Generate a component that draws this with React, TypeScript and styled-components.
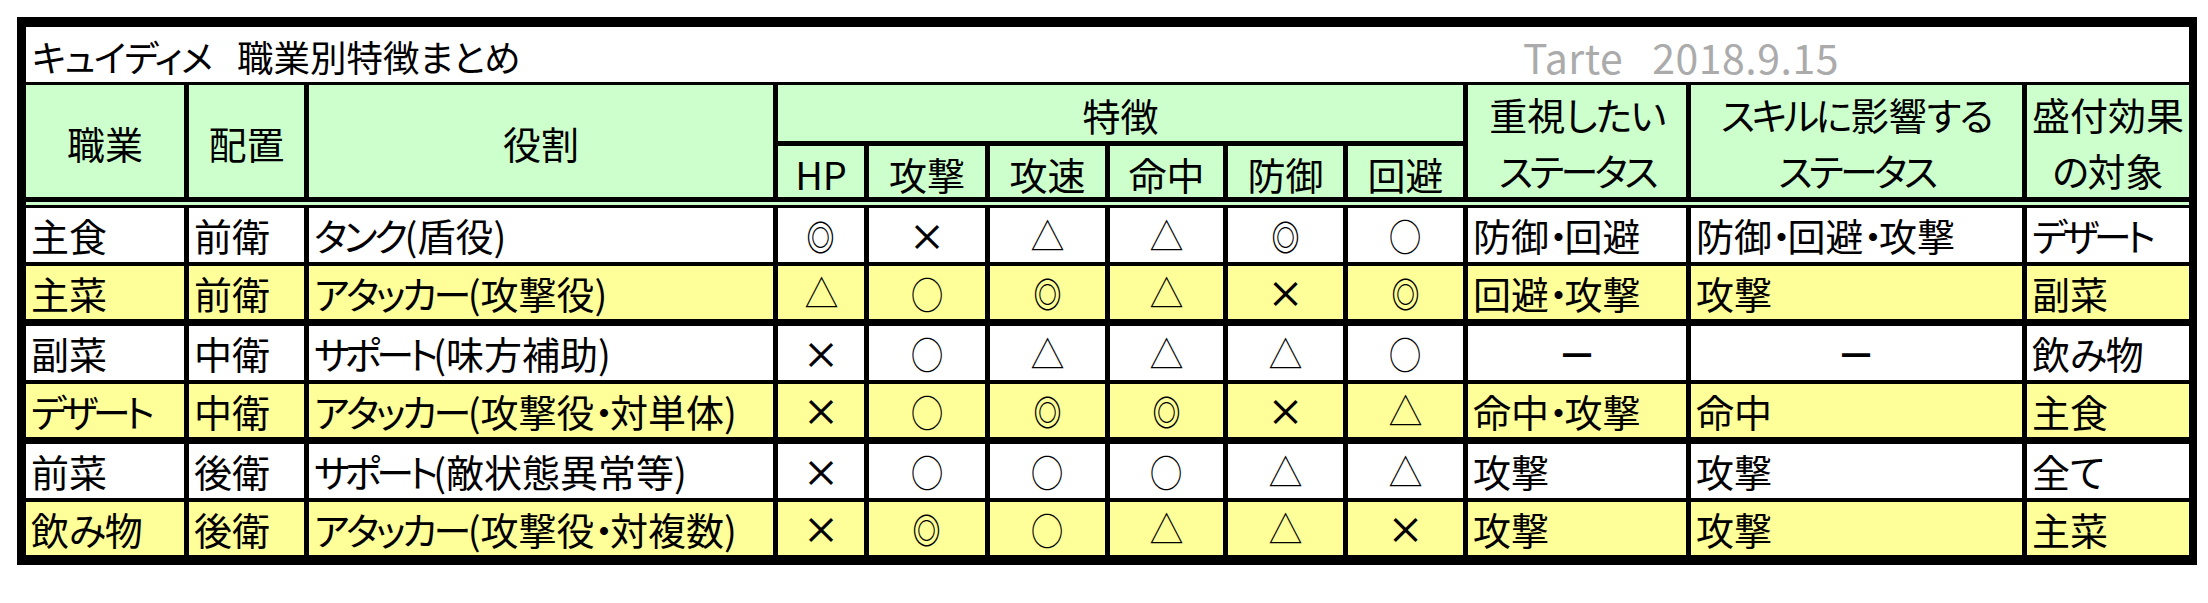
import React from 'react';
import styled, { createGlobalStyle } from 'styled-components';

const GlobalStyle = createGlobalStyle`
  html, body {
    margin: 0;
    padding: 0;
    background: #ffffff;
  }
  body {
    font-family: "Noto Sans CJK JP", "Noto Sans", sans-serif;
    color: #000000;
  }
`;

const COLUMNS = '163px 120px 469px 91px 121px 120px 118px 120px 120px 223px 336px 162px';
const GREEN = '#ccffcc';
const YELLOW = '#ffff99';

const Sheet = styled.div`
  margin: 17px 0 0 17px;
  width: 2163px;
  border: 9px solid #000;
  border-top-width: 10px;
  border-right-width: 8px;
  border-bottom-width: 10px;
  font-size: 38px;
  font-feature-settings: "palt" 1;
  line-height: 1;
`;

const TitleBar = styled.div`
  height: 58px;
  box-sizing: border-box;
  border-bottom: 3px solid #000;
  display: flex;
  align-items: flex-end;
  padding: 0 0 7px 6px;
  background: #fff;
`;

const Title = styled.span`
  flex: 0 0 1491px;
  font-size: 36.5px;
  white-space: pre;
`;

const Stamp = styled.span`
  color: #ababab;
  font-size: 41px;
  letter-spacing: 0.5px;
  white-space: pre;
  margin-bottom: -2px;
`;

const Header = styled.div`
  display: grid;
  grid-template-columns: ${COLUMNS};
  grid-template-rows: 61px 51px;
  background: ${GREEN};
`;

const HeadCell = styled.div<{ $rows?: number; $cols?: number; $last?: boolean; $stacked?: boolean }>`
  grid-row: span ${(p) => p.$rows ?? 1};
  grid-column: span ${(p) => p.$cols ?? 1};
  box-sizing: border-box;
  border-right: ${(p) => (p.$last ? 0 : 5)}px solid #000;
  border-bottom: ${(p) => (p.$cols && p.$cols > 1 ? 5 : 0)}px solid #000;
  display: flex;
  flex-direction: ${(p) => (p.$stacked ? 'column' : 'row')};
  align-items: center;
  justify-content: center;
  padding-top: ${(p) => (p.$stacked ? 0 : 4)}px;
  white-space: nowrap;
`;

const HeadLine = styled.span<{ $h: number }>`
  height: ${(p) => p.$h}px;
  display: flex;
  align-items: center;
`;

const DoubleRule = styled.div`
  height: 3px;
  border-top: 5px solid #000;
  border-bottom: 3px solid #000;
  background: ${GREEN};
`;

const Row = styled.div<{ $bg: string; $h: number; $rule: number }>`
  display: grid;
  grid-template-columns: ${COLUMNS};
  height: ${(p) => p.$h}px;
  box-sizing: border-box;
  background: ${(p) => p.$bg};
  border-bottom: ${(p) => p.$rule}px solid #000;
`;

const Cell = styled.div<{ $align?: 'left' | 'center'; $last?: boolean }>`
  box-sizing: border-box;
  border-right: ${(p) => (p.$last ? 0 : 5)}px solid #000;
  display: flex;
  align-items: center;
  justify-content: ${(p) => (p.$align === 'center' ? 'center' : 'flex-start')};
  padding: 0 5px;
  white-space: nowrap;
  overflow: hidden;
`;

// kana in the sheet's font are set tighter than the kanji
const Kana = styled.span<{ $tight: number }>`
  letter-spacing: ${(p) => -p.$tight}px;
`;

type MarkStyle = { size: number; weight: number; sx: number };

const markStyles: Record<string, MarkStyle> = {
  '◎': { size: 35, weight: 700, sx: 0.8 },
  '○': { size: 38, weight: 300, sx: 0.86 },
  '△': { size: 37, weight: 300, sx: 0.92 },
  '×': { size: 37, weight: 500, sx: 1 },
  '－': { size: 36, weight: 700, sx: 1.1 },
};

const Mark = styled.span<{ $kind: string }>`
  display: inline-block;
  font-size: ${(p) => markStyles[p.$kind]?.size ?? 38}px;
  font-weight: ${(p) => markStyles[p.$kind]?.weight ?? 400};
  transform: scaleX(${(p) => markStyles[p.$kind]?.sx ?? 1});
`;

const KATA = /[\u30A0-\u30FF]+/;
const HIRA = /[\u3040-\u309F]+/;

const Jp: React.FC<{ text: string; scale?: number }> = ({ text, scale = 1 }) => {
  const parts = text.split(/([\u30A0-\u30FF]+|[\u3040-\u309F]+)/).filter(Boolean);
  return (
    <>
      {parts.map((part, i) =>
        KATA.test(part) ? (
          <Kana key={i} $tight={(part.includes('ー') && part.length <= 4 ? 5 : 3.5) * scale}>{part}</Kana>
        ) : HIRA.test(part) ? (
          <Kana key={i} $tight={1.5 * scale}>{part}</Kana>
        ) : (
          <React.Fragment key={i}>{part}</React.Fragment>
        )
      )}
    </>
  );
};

type Line = {
  job: string;
  pos: string;
  role: string;
  marks: string[];
  focus: string;
  skill: string;
  bonus: string;
};

const lines: Line[] = [
  { job: '主食', pos: '前衛', role: 'タンク(盾役)', marks: ['◎', '×', '△', '△', '◎', '○'], focus: '防御・回避', skill: '防御・回避・攻撃', bonus: 'デザート' },
  { job: '主菜', pos: '前衛', role: 'アタッカー(攻撃役)', marks: ['△', '○', '◎', '△', '×', '◎'], focus: '回避・攻撃', skill: '攻撃', bonus: '副菜' },
  { job: '副菜', pos: '中衛', role: 'サポート(味方補助)', marks: ['×', '○', '△', '△', '△', '○'], focus: '－', skill: '－', bonus: '飲み物' },
  { job: 'デザート', pos: '中衛', role: 'アタッカー(攻撃役・対単体)', marks: ['×', '○', '◎', '◎', '×', '△'], focus: '命中・攻撃', skill: '命中', bonus: '主食' },
  { job: '前菜', pos: '後衛', role: 'サポート(敵状態異常等)', marks: ['×', '○', '○', '○', '△', '△'], focus: '攻撃', skill: '攻撃', bonus: '全て' },
  { job: '飲み物', pos: '後衛', role: 'アタッカー(攻撃役・対複数)', marks: ['×', '◎', '○', '△', '△', '×'], focus: '攻撃', skill: '攻撃', bonus: '主菜' },
];

// row height (with its bottom rule) and the rule under each row
const rowHeights = [58, 60, 58, 60, 58, 53];
const rowRules = [4, 7, 4, 7, 4, 0];

const traits = ['HP', '攻撃', '攻速', '命中', '防御', '回避'];

const StatusText: React.FC<{ value: string }> = ({ value }) =>
  value === '－' ? <Mark $kind="－">{value}</Mark> : <Jp text={value} />;

const App: React.FC = () => {
  return (
    <>
      <GlobalStyle />
      <Sheet>
        <TitleBar>
          <Title>
            <Jp text={'キュイディメ\u2002\u2009職業別特徴まとめ'} scale={0.45} />
          </Title>
          <Stamp>{'Tarte   2018.9.15'}</Stamp>
        </TitleBar>

        <Header>
          <HeadCell $rows={2}>職業</HeadCell>
          <HeadCell $rows={2}>配置</HeadCell>
          <HeadCell $rows={2}>役割</HeadCell>
          <HeadCell $cols={6}>特徴</HeadCell>
          <HeadCell $rows={2} $stacked>
            <HeadLine $h={58}><Jp text="重視したい" /></HeadLine>
            <HeadLine $h={54}><Jp text="ステータス" /></HeadLine>
          </HeadCell>
          <HeadCell $rows={2} $stacked>
            <HeadLine $h={58}><Jp text="スキルに影響する" /></HeadLine>
            <HeadLine $h={54}><Jp text="ステータス" /></HeadLine>
          </HeadCell>
          <HeadCell $rows={2} $stacked $last>
            <HeadLine $h={58}>盛付効果</HeadLine>
            <HeadLine $h={54}><Jp text="の対象" /></HeadLine>
          </HeadCell>
          {traits.map((t) => (
            <HeadCell key={t}>{t}</HeadCell>
          ))}
        </Header>

        <DoubleRule />

        {lines.map((line, i) => (
          <Row key={line.job} $bg={i % 2 === 0 ? '#ffffff' : YELLOW} $h={rowHeights[i]} $rule={rowRules[i]}>
            <Cell><Jp text={line.job} /></Cell>
            <Cell>{line.pos}</Cell>
            <Cell><Jp text={line.role} /></Cell>
            {line.marks.map((m, j) => (
              <Cell key={j} $align="center">
                <Mark $kind={m}>{m}</Mark>
              </Cell>
            ))}
            <Cell $align={line.focus === '－' ? 'center' : 'left'}>
              <StatusText value={line.focus} />
            </Cell>
            <Cell $align={line.skill === '－' ? 'center' : 'left'}>
              <StatusText value={line.skill} />
            </Cell>
            <Cell $last><Jp text={line.bonus} /></Cell>
          </Row>
        ))}
      </Sheet>
    </>
  );
};

export default App;
